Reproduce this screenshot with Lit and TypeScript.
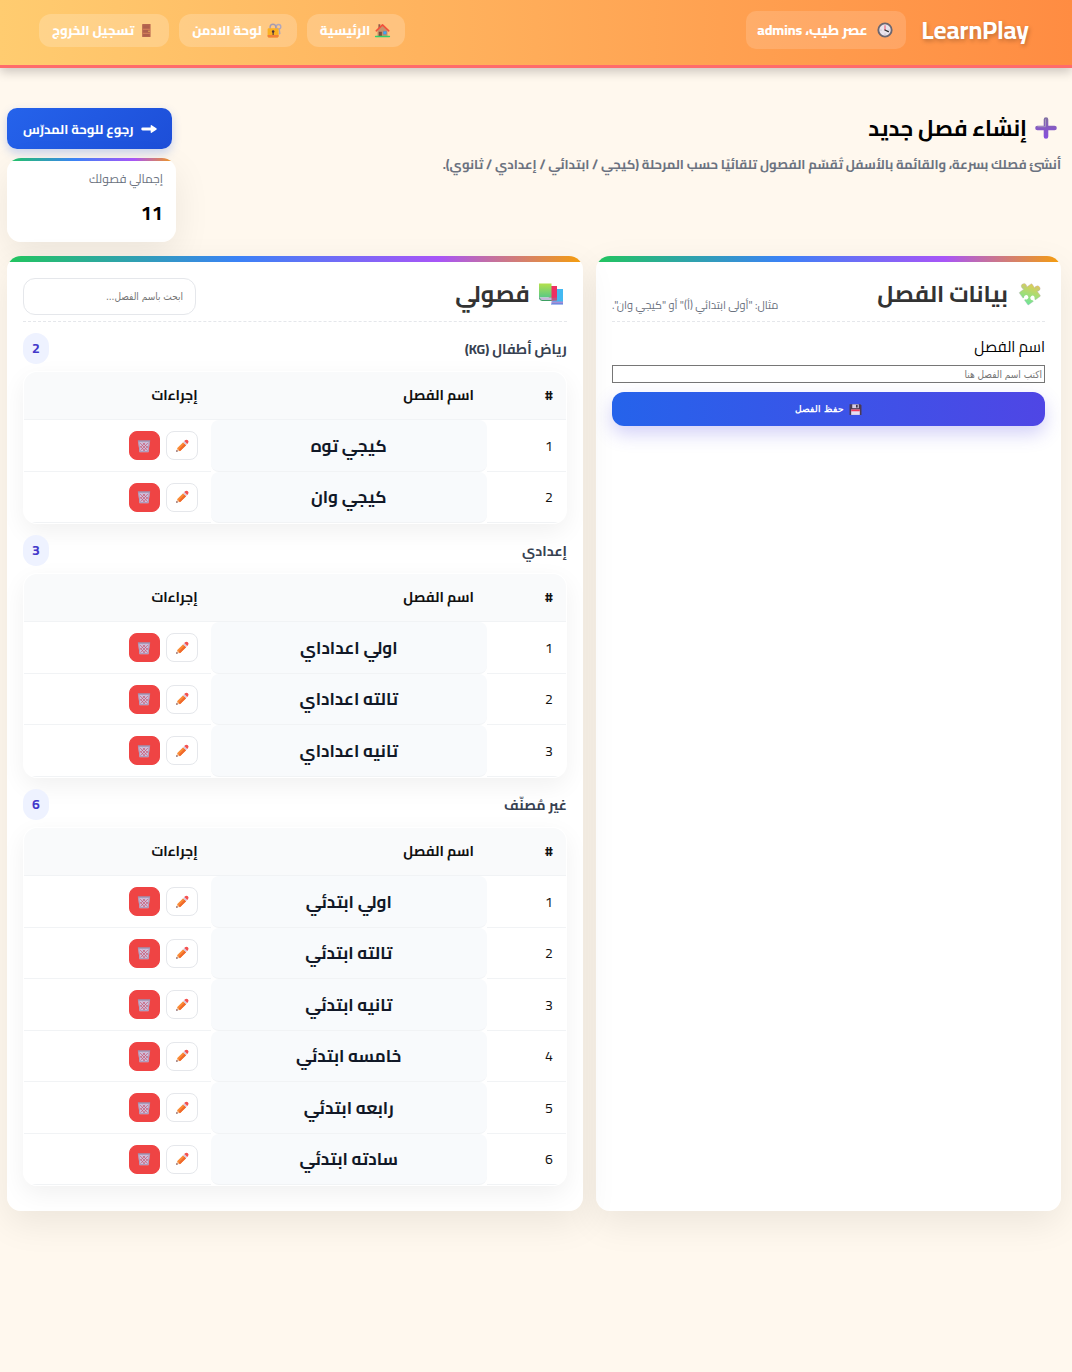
import { LitElement, html, svg, css, nothing } from "lit";
import { customElement, property, state } from "lit/decorators.js";

const ART: Record<string, unknown> = {
  home: svg`
    <rect x="5.5" y="2" width="3" height="6" fill="#8d5a4a"/>
    <path d="M4 12 12 4.500l8 7.500V22H4z" fill="#c8936b"/>
    <path d="M2 12.500 12 3l10 9.500" fill="none" stroke="#f0503c" stroke-width="2.600" stroke-linecap="round" stroke-linejoin="round"/>
    <rect x="6" y="14" width="5" height="8" fill="#7d4b3c"/>
    <rect x="13" y="13" width="5.500" height="5" fill="#3aa5f5" stroke="#8e7f8c" stroke-width=".8"/>
    <path d="M1 21.500h22" stroke="#2fd06b" stroke-width="2.400" stroke-linecap="round"/>`,
  lock: svg`
    <circle cx="18.500" cy="6" r="3.600" fill="none" stroke="#b0a6bd" stroke-width="2.200"/>
    <path d="M19.500 9.500 20.500 17l-2 1" fill="none" stroke="#b0a6bd" stroke-width="2.200"/>
    <path d="M5 11V6.500a4.500 4.500 0 0 1 9 0V11" fill="none" stroke="#a59bb0" stroke-width="2.200"/>
    <rect x="1" y="8.500" width="17.500" height="14.500" rx="1.800" fill="#fbb022"/>
    <path d="M1 19h17.500v2.200a1.800 1.800 0 0 1-1.800 1.800H2.800a1.800 1.800 0 0 1-1.800-1.800z" fill="#f2803a"/>
    <circle cx="9.800" cy="13.500" r="2" fill="#48333f"/><path d="M8.900 14h1.800v5H8.900z" fill="#48333f"/>`,
  door: svg`
    <rect x="5" y="1.500" width="13.500" height="21" rx="1" fill="#b9674f"/>
    <path d="M7 4h9.500v5H7zM7 11h9.500v4.500H7zM7 17.500h9.500V21H7z" fill="#b0604c"/>
    <path d="M6 10h11.500M6 16.500h11.500" stroke="#e08a5f" stroke-width="1.200"/>
    <circle cx="16" cy="13.200" r="1.100" fill="#f5c35a"/>`,
  clock: svg`
    <circle cx="12" cy="12" r="10" fill="#e9e3ec" stroke="#6b6670" stroke-width="2.800"/>
    <path d="M12 12V5.500" stroke="#f0506a" stroke-width="1.500" stroke-linecap="round"/>
    <path d="m12 12 5 2.500" stroke="#333" stroke-width="2" stroke-linecap="round"/>
    <g fill="#aaa0b4"><circle cx="6" cy="12" r=".8"/><circle cx="18" cy="12" r=".8"/><circle cx="12" cy="18" r=".8"/></g>`,
  plus: svg`
    <defs><linearGradient id="pg" x2="0" y2="1"><stop stop-color="#8172a0"/><stop offset=".5" stop-color="#865ac4"/><stop offset="1" stop-color="#8650de"/></linearGradient></defs>
    <path d="M12 1.200a2.300 2.300 0 0 1 2.300 2.300v6.200h6.200a2.300 2.300 0 0 1 0 4.600h-6.200v6.200a2.300 2.300 0 0 1-4.600 0v-6.200H3.500a2.300 2.300 0 0 1 0-4.600h6.200V3.500A2.300 2.300 0 0 1 12 1.200z" fill="url(#pg)"/>
    <path d="M11.500 3.200v7.500H3.500" fill="none" stroke="#a497bd" stroke-width="1"/>`,
  puzzle: svg`
    <defs>
      <linearGradient id="zg" gradientUnits="userSpaceOnUse" x1="22" y1="4" x2="2" y2="18">
        <stop stop-color="#edc84e"/><stop offset=".5" stop-color="#a9dc74"/><stop offset="1" stop-color="#66e69c"/>
      </linearGradient>
      <mask id="zm">
        <rect x="-6" y="-6" width="36" height="36" fill="#fff"/>
        <circle cx="7.800" cy="13" r="2.200" fill="#000"/><rect x="3" y="12" width="4" height="2" fill="#000"/>
        <circle cx="12.500" cy="17.200" r="2.200" fill="#000"/><rect x="11.500" y="18" width="2" height="4" fill="#000"/>
      </mask>
    </defs>
    <g transform="rotate(-36 12 12)" fill="url(#zg)" stroke="#b7a8cc" stroke-width=".3" mask="url(#zm)">
      <circle cx="12.500" cy="2.800" r="2.700"/><circle cx="22" cy="12.500" r="2.700"/>
      <path d="M5.500 5h5.300l.4-2h2.600l.4 2h5.300a.8.8 0 0 1 .8.800v5l2 .4v2.600l-2 .4v5.500a.8.8 0 0 1-.8.800h-14a.8.8 0 0 1-.8-.8V5.800a.8.8 0 0 1 .8-.8z"/>
    </g>`,
  books: svg`
    <defs><linearGradient id="bg" x2="0" y2="1"><stop stop-color="#b4e04c"/><stop offset="1" stop-color="#58c985"/></linearGradient></defs>
    <path d="M14 7h10v15H13z" fill="#43b9f2"/><path d="M12 19.500h12V22H13z" fill="#a58fd6"/><path d="M24 22H12" stroke="#4a7be0" stroke-width="1"/>
    <path d="M9 4h9v13.500l-8 1.500z" fill="#ee2f62"/><path d="m7 16.500 11-1v3l-11 .5z" fill="#b9577f"/>
    <path d="M0 1.500h12.500v14H0z" fill="url(#bg)"/><path d="M0 15.500h12.500V18H2c-1.400 0-2-1-2-2.500z" fill="#c3b7d8"/><path d="M.5 15.500Q.5 18.500 3 18.500h9.500" fill="none" stroke="#3d9f62" stroke-width="1"/>`,
  save: svg`
    <path d="M1 2.500h20l2 2V22H1z" fill="#4b3a52"/>
    <rect x="6" y="2.500" width="12" height="7" fill="#d9cfe6"/><rect x="13" y="3.500" width="3" height="5" fill="#3d2f45"/>
    <rect x="4" y="12" width="16" height="10" fill="#e6dcf2"/><path d="M4 12h16v3H4z" fill="#f2395a"/>`,
  pencil: svg`
    <path d="m2 22 2-6.500 4.500 4.500z" fill="#f6c9a0"/><path d="m2 22 .9-3L5 21z" fill="#4a2545"/>
    <path d="M3.500 16 14 5.500l5 5L8.500 21z" fill="#fb8b35"/><path d="m6.200 18.500 10.500-10.800L19 10.500 8.500 21z" fill="#f0692c"/>
    <path d="m14 5.500 2-2 5 5-2 2z" fill="#d6c8e0"/>
    <path d="m16 3.500 1.200-1.200a3.300 3.300 0 0 1 4.900 4.900L21 8.500z" fill="#f4504f"/>`,
  trash: svg`
    <path d="M2 3.500h20l-2.300 19H4.300z" fill="#cfc0dc"/>
    <path d="M5 6.500 18 20M10 6.500l8.500 8.500M5.500 12l8 9M19 6.500 6 20M14 6.500 5.800 14.500M19 12l-8.500 9" stroke="#c9546f" stroke-width="1.200"/>
    <path d="M3 4.500 5 21.500h14l2-17" fill="none" stroke="#a99abb" stroke-width="1.600"/>
    <path d="M1.500 3.500h21" stroke="#9d92b0" stroke-width="2.400"/>`,
  arrow: svg`<path d="M2.500 9.900H14.500V7a1 1 0 0 1 1.500-.8L23 11a1.200 1.200 0 0 1 0 2l-7 4.800a1 1 0 0 1-1.500-.8v-2.900H2.500a2.100 2.100 0 0 1 0-4.200z" fill="#fff"/>`,
};

const icon = (name: string) =>
  html`<svg class="ico" viewBox="0 0 24 24" aria-hidden="true">${ART[name]}</svg>`;

interface Group { title: string; rows: string[] }

const GROUPS: Group[] = [
  { title: "رياض أطفال (KG)", rows: ["كيجي توه", "كيجي وان"] },
  { title: "إعدادي", rows: ["اولي اعداداي", "تالته اعداداي", "تانيه اعداداي"] },
  {
    title: "غير مُصنّف",
    rows: ["اولي ابتدئي", "تالته ابتدئي", "تانيه ابتدئي", "خامسه ابتدئي", "رابعه ابتدئي", "سادته ابتدئي"],
  },
];

const shared = css`
  * { box-sizing: border-box; }
  .ico { display: block; flex: none; width: 16px; height: 16px; overflow: visible; }
  button, input { font-family: "DejaVu Sans Condensed", "DejaVu Sans", sans-serif; }
  button { cursor: pointer; }
`;

@customElement("class-group")
class ClassGroup extends LitElement {
  @property({ attribute: false }) group!: Group;
  @property() filter = "";

  static styles = [
    shared,
    css`
      :host { display: block; }
      .head { display: flex; align-items: center; justify-content: space-between; padding: 11px 0 7px; }
      .title { margin: 0; font-size: 14px; font-weight: 700; line-height: 24px; color: #374151; }
      .count {
        min-width: 26px; padding: 0 9px; border-radius: 16px; background: #eef2ff; color: #4338ca;
        font-size: 14px; font-weight: 700; line-height: 31px; text-align: center;
      }
      .frame { overflow: hidden; border: 1px solid #fff; border-radius: 14px; background: #fff; }
      .shadow { border-radius: 14px; box-shadow: 0 8px 24px rgba(0, 0, 0, 0.06); }
      table { width: 100%; border-collapse: separate; border-spacing: 0; table-layout: fixed; }
      th, td { padding: 0 13px; border-bottom: 1px solid #f1f3f5; text-align: start; font-size: 14px; }
      th { height: 48px; padding-bottom: 2px; background: #f9fafb; font-weight: 700; color: #111; }
      td { height: 52px; color: #111; }
      tr:nth-child(even) td { height: 51px; }
      .num { width: 79px; }
      .name { width: 51%; }
      td.name {
        border-radius: 8px; background: #f8fafc; color: #111827;
        font-size: 17px; font-weight: 700; text-align: center;
      }
      .ops { display: flex; gap: 6px; }
      .op {
        display: grid; place-items: center; width: 32px; height: 29px; padding: 0;
        border: 1px solid #e5e7eb; border-radius: 8px; background: #fff;
      }
      .del { width: 31px; border-color: #ef4444; background: #ef4444; }
      .op .ico { width: 14px; height: 14px; }
    `,
  ];

  render() {
    const rows = this.group.rows.filter((r) => r.includes(this.filter));
    if (!rows.length) return nothing;
    return html`
      <div class="head">
        <h3 class="title">${this.group.title}</h3>
        <span class="count">${rows.length}</span>
      </div>
      <div class="shadow"><div class="frame">
        <table>
          <thead><tr><th class="num">#</th><th class="name">اسم الفصل</th><th>إجراءات</th></tr></thead>
          <tbody>
            ${rows.map((r, i) => html`<tr>
              <td class="num">${i + 1}</td>
              <td class="name">${r}</td>
              <td><div class="ops">
                <button class="op" type="button" aria-label="تعديل">${icon("pencil")}</button>
                <button class="op del" type="button" aria-label="حذف">${icon("trash")}</button>
              </div></td>
            </tr>`)}
          </tbody>
        </table>
      </div></div>`;
  }
}

@customElement("app-root")
class AppRoot extends LitElement {
  @state() private filter = "";

  static styles = [
    shared,
    css`
      :host {
        display: block; min-height: 100vh; background: #fff8ee; color: #000;
        font-family: Cairo, "Noto Sans Arabic", "Noto Sans", sans-serif; font-size: 16px;
      }
      a { color: inherit; text-decoration: none; }
      h1, h2, p { margin: 0; }

      .top {
        display: flex; align-items: center; justify-content: space-between; height: 68px;
        padding: 0 43px 5px 39px; border-bottom: 3px solid #ff6b6b;
        background: linear-gradient(to left, #ff8c42, #ffcc70); color: #fff;
        box-shadow: 0 4px 10px rgba(0, 0, 0, 0.2);
      }
      .brand, .nav { display: flex; align-items: center; }
      .brand { gap: 15px; }
      .nav { gap: 10px; }
      .logo { font-size: 25px; font-weight: 700; line-height: 38px; text-shadow: 1px 2px 4px rgba(0, 0, 0, 0.25); }
      .hello {
        display: flex; align-items: center; gap: 10px; height: 38px; padding: 0 13px 0 11px; border-radius: 10px;
        background: rgba(255, 255, 255, 0.15); font-size: 14px; font-weight: 800;
      }
      .link {
        display: flex; align-items: center; gap: 5px; height: 33px; padding: 0 15px 0 13px; border-radius: 12px;
        background: rgba(255, 255, 255, 0.2); font-size: 13px; font-weight: 800;
      }
      .link .ico { width: 15px; height: 15px; }

      main { padding: 40px 11px 40px 7px; }
      .intro { display: flex; justify-content: space-between; align-items: flex-start; }
      .title { display: flex; align-items: center; gap: 7px; padding-inline-start: 3px; font-size: 22px; font-weight: 700; line-height: 40px; }
      .title .ico { width: 24px; height: 24px; }
      .lead { padding-top: 4px; color: #6b7280; font-size: 13px; font-weight: 700; line-height: 24px; }
      .side { display: flex; flex-direction: column; align-items: flex-end; gap: 9px; }
      .back {
        display: flex; align-items: center; gap: 8px; height: 41px; padding: 0 15px 0 16px; border-radius: 10px;
        background: linear-gradient(135deg, #2563eb, #1d4ed8); color: #fff; font-size: 13px; font-weight: 700;
        box-shadow: 0 4px 10px rgba(37, 99, 235, 0.25);
      }
      .shell { border-radius: 14px; box-shadow: 0 12px 36px rgba(0, 0, 0, 0.08); }
      .card { height: 100%; overflow: hidden; border-radius: 14px; background: #fff; }
      .card::before {
        content: ""; display: block; height: 6px;
        background: linear-gradient(90deg, #22c55e, #3b82f6 40%, #a855f7 75%, #f59e0b);
      }
      .stat { width: 169px; padding: 6px 13px 11px; }
      .card.small::before { height: 3px; }
      .stat dt { color: #6b7280; font-size: 12px; line-height: 24px; }
      .stat dd { margin: 0; padding-top: 4px; font-size: 20px; font-weight: 700; line-height: 36px; }
      dl { margin: 0; }

      .cols { display: grid; grid-template-columns: minmax(0, 105fr) minmax(0, 130fr); gap: 13px; padding-top: 14px; }
      .body { padding: 10px 16px 25px; }
      .bar {
        display: flex; align-items: flex-end; justify-content: space-between; height: 50px;
        padding-bottom: 6px; border-bottom: 1px dashed #e5e7eb;
      }
      .heading { display: flex; align-items: center; gap: 9px; padding-inline-start: 4px; color: #333; font-size: 23px; font-weight: 700; line-height: 42px; }
      .heading .ico { width: 24px; height: 24px; }
      .hint { color: #6b7280; font-size: 11px; line-height: 20px; }
      .search {
        width: 173px; height: 37px; padding: 0 12px; border: 1px solid #e5e7eb; border-radius: 12px;
        background: #fff; font-size: 10px;
      }
      .form { display: grid; padding-top: 9px; }
      .label { font-size: 15px; line-height: 32px; }
      .field { height: 18px; margin: 2px 0 9px; padding: 0 2px; border: 1px solid #767676; border-radius: 0; font-size: 10px; }
      .save {
        display: flex; align-items: center; justify-content: center; gap: 5px; height: 34px; border: 0;
        border-radius: 12px; background: linear-gradient(90deg, #2563eb, #4f46e5); color: #fff;
        font-family: "Liberation Sans", sans-serif; font-size: 9px; font-weight: 700;
        box-shadow: 0 8px 18px rgba(79, 70, 229, 0.25);
      }
      .save .ico { width: 13px; height: 13px; }
      ::placeholder { color: #757575; opacity: 1; }
    `,
  ];

  render() {
    return html`
      <div dir="rtl" lang="ar">
        <header class="top">
          <div class="brand">
            <a class="logo" href="#">LearnPlay</a>
            <span class="hello">${icon("clock")}<span>عصر طيب، admins</span></span>
          </div>
          <nav class="nav">
            <a class="link" href="#home">${icon("home")}الرئيسية</a>
            <a class="link" href="#admin">${icon("lock")}لوحة الادمن</a>
            <a class="link" href="#logout">${icon("door")}تسجيل الخروج</a>
          </nav>
        </header>
        <main>
          <section class="intro">
            <div>
              <h1 class="title">${icon("plus")}إنشاء فصل جديد</h1>
              <p class="lead">أنشئ فصلك بسرعة، والقائمة بالأسفل تُقسّم الفصول تلقائيًا حسب المرحلة (كيجي / ابتدائي / إعدادي / ثانوي).</p>
            </div>
            <div class="side">
              <a class="back" href="#teacher">${icon("arrow")}رجوع للوحة المدرّس</a>
              <div class="shell"><div class="card small">
                <dl class="stat"><dt>إجمالي فصولك</dt><dd>${GROUPS.reduce((n, g) => n + g.rows.length, 0)}</dd></dl>
              </div></div>
            </div>
          </section>
          <div class="cols">
            <section class="shell"><div class="card"><div class="body">
              <div class="bar">
                <h2 class="heading">${icon("puzzle")}بيانات الفصل</h2>
                <p class="hint">مثال: "أولى ابتدائي (أ)" أو "كيجي وان".</p>
              </div>
              <form class="form" @submit=${(e: Event) => e.preventDefault()}>
                <label class="label" for="class-name">اسم الفصل</label>
                <input class="field" id="class-name" type="text" placeholder="اكتب اسم الفصل هنا" />
                <button class="save" type="submit">${icon("save")}حفظ الفصل</button>
              </form>
            </div></div></section>
            <section class="shell"><div class="card"><div class="body">
              <div class="bar">
                <h2 class="heading">${icon("books")}فصولي</h2>
                <input class="search" type="search" aria-label="ابحث باسم الفصل" placeholder="ابحث باسم الفصل..."
                  @input=${(e: Event) => { this.filter = (e.target as HTMLInputElement).value; }} />
              </div>
              ${GROUPS.map((g) => html`<class-group .group=${g} .filter=${this.filter}></class-group>`)}
            </div></div></section>
          </div>
        </main>
      </div>`;
  }
}
